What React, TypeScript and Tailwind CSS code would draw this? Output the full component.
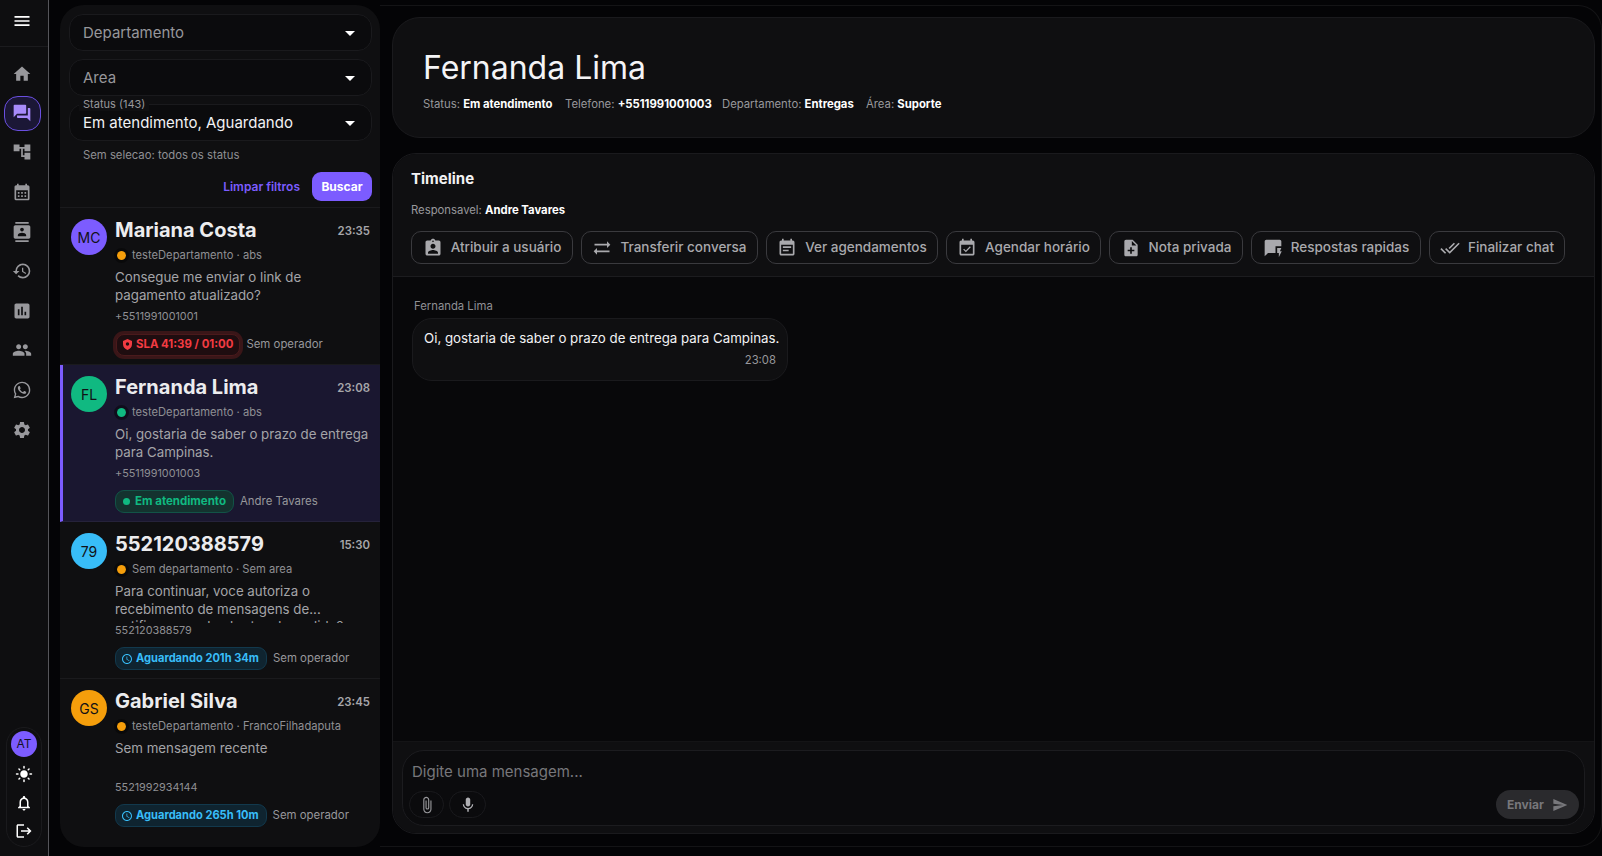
import React from "react";
import {
  MdHome, MdForum, MdAccountTree, MdCalendarMonth, MdContacts, MdHistory, MdAssessment, MdPeople,
  MdWhatsapp, MdSettings, MdMenu, MdArrowDropDown, MdLightMode, MdOutlineNotifications, MdLogout,
  MdAssignmentInd, MdSyncAlt, MdEventNote, MdEventAvailable, MdNoteAdd, MdQuickreply, MdDoneAll,
  MdAttachFile, MdMic, MdSend, MdAccessTime,
} from "react-icons/md";

const navIcons = [MdHome, MdForum, MdAccountTree, MdCalendarMonth, MdContacts, MdHistory, MdAssessment, MdPeople, MdWhatsapp, MdSettings];

const actions = [
  { label: "Atribuir a usuário", icon: MdAssignmentInd, w: "w-[162px]" },
  { label: "Transferir conversa", icon: MdSyncAlt, w: "w-[177px]" },
  { label: "Ver agendamentos", icon: MdEventNote, w: "w-[172px]" },
  { label: "Agendar horário", icon: MdEventAvailable, w: "w-[155px]" },
  { label: "Nota privada", icon: MdNoteAdd, w: "w-[134px]" },
  { label: "Respostas rapidas", icon: MdQuickreply, w: "w-[170px]" },
  { label: "Finalizar chat", icon: MdDoneAll, w: "w-[136px]" },
];

function ShieldIcon() {
  return (
    <svg viewBox="0 0 10 12" className="h-[11px] w-[9px]" fill="currentColor">
      <path fillRule="evenodd" d="M5 0 10 2v3.6C10 8.6 7.9 11 5 12 2.1 11 0 8.6 0 5.6V2L5 0Zm0 3.6a1.9 1.9 0 1 0 0 3.8 1.9 1.9 0 0 0 0-3.8Z" />
    </svg>
  );
}

function Select({ label, strong }: { label: string; strong?: boolean }) {
  return (
    <div className="flex h-[37px] items-center justify-between rounded-[14px] border border-[#1a1a1d] bg-[#0b0b0d] pl-[13px] pr-[9px]">
      <span className={strong ? "pt-[2px] text-[15px] text-[#f2f2f4]" : "pt-[2px] text-[15px] text-[#97979b]"}>{label}</span>
      <MdArrowDropDown className="text-[24px] text-white" />
    </div>
  );
}

function Conversation({
  initials, color, name, time, dot, sub, msg, extra, phone, chip, op, active,
}: {
  initials: string; color: string; name: string; time: string; dot: string; sub: string; msg: React.ReactNode;
  extra?: string; phone: string; chip: React.ReactNode; op: string; active?: boolean;
}) {
  return (
    <div className={`flex h-[157px] shrink-0 gap-2 border-b pt-[10px] pr-[10px] last:border-b-0 ${active ? "border-l-[3px] border-b-[#25223a] border-l-[#7c5cff] bg-[#1a1730] pl-2" : "border-b-[#1a1a1d] pl-[11px]"}`}>
      <div className={`mt-px flex size-9 shrink-0 items-center justify-center rounded-full text-[14px] text-[#111116] ${color}`}>{initials}</div>
      <div className="min-w-0 flex-1">
        <div className="flex h-6 items-center justify-between">
          <span className="text-[20px] font-bold text-[#ececee]">{name}</span>
          <span className="mt-1 text-[11.4px] font-semibold text-[#a6a6aa]">{time}</span>
        </div>
        <div className="mt-[5px] flex h-4 items-center gap-[6px] text-[11.2px] text-[#8f8f94]">
          <span className={`ml-[2px] size-[9px] rounded-full outline-[3px] outline-[#000000]/40 ${dot}`} />
          <span>{sub}</span>
        </div>
        <div className="mt-[6px] h-[40px] overflow-hidden text-[13.3px] leading-[17.5px] text-[#a4a4a8]">
          {msg}
          {extra && <div className="truncate">{extra}</div>}
        </div>
        <div className="text-[10.8px] leading-4 text-[#8f8f94]">{phone}</div>
        <div className="mt-2 flex h-[23px] items-center gap-[6px] text-[11.4px] text-[#97979b]">
          {chip}
          <span>{op}</span>
        </div>
      </div>
    </div>
  );
}

export default function App() {
  return (
    <div className="flex h-[856px] w-[1602px] overflow-hidden bg-[#040406] font-['Inter',sans-serif]">
      {/* barra lateral */}
      <aside className="flex w-[49px] shrink-0 flex-col border-r border-r-[#55555a] bg-[#0e0e10]">
        <div className="flex h-[47px] shrink-0 items-center justify-center border-b border-b-[#1b1b1e] pb-1 pr-[5px]">
          <MdMenu className="text-[20px] text-white" />
        </div>
        <nav className="flex flex-col items-center pt-[7px] pr-[4px]">
          {navIcons.map((Icon, i) =>
            i === 1 ? (
              <div key={i} className="my-[2px] flex h-[35px] w-[37px] items-center justify-center rounded-[14px] border border-[#6a4fe0] bg-[#1b1736]">
                <Icon className="text-[20px] text-[#a78bfa]" />
              </div>
            ) : (
              <div key={i} className="flex h-[39.6px] w-[37px] items-center justify-center">
                <Icon className="text-[20px] text-[#98989c]" />
              </div>
            ),
          )}
        </nav>
        <div className="mt-auto mb-[9px] ml-[6px] flex h-[120px] w-9 flex-col items-center rounded-[18px] border border-[#1a1a1d] pt-[3px]">
          <div className="flex size-[26px] items-center justify-center rounded-full bg-[#7c5cff] text-[12px] text-[#14121f]">AT</div>
          <MdLightMode className="mt-2 text-[18px] text-white" />
          <MdOutlineNotifications className="mt-[11px] text-[18px] text-white" />
          <MdLogout className="mt-[10px] text-[18px] text-white" />
        </div>
      </aside>

      <div className="mt-[5px] mb-[9px] ml-[11px] flex min-w-0 flex-1">
        {/* lista de conversas */}
        <section className="flex w-[320px] shrink-0 flex-col overflow-hidden rounded-[24px] bg-[#0f0f11]">
          <div className="h-[203px] shrink-0 border-b border-b-[#1a1a1d] pl-[9px] pr-2 pt-[9px]">
            <Select label="Departamento" />
            <div className="mt-2"><Select label="Area" /></div>
            <div className="relative mt-2">
              <Select label="Em atendimento, Aguardando" strong />
              <span className="absolute -top-[7px] left-[10px] bg-[#0f0f11] px-1 text-[11px] leading-[14px] text-[#98989c]">Status (143)</span>
            </div>
            <div className="mt-[6px] pl-[14px] text-[11.3px] leading-4 text-[#8f8f94]">Sem selecao: todos os status</div>
            <div className="mt-[9px] flex items-center justify-end gap-[12px]">
              <span className="text-[12px] font-semibold text-[#7c5cff]">Limpar filtros</span>
              <span className="flex h-[29px] w-[60px] items-center justify-center rounded-[9px] bg-[#7c5cff] text-[12px] font-bold text-white">Buscar</span>
            </div>
          </div>
          <div className="flex min-h-0 flex-1 flex-col overflow-hidden">
            <Conversation
              initials="MC" color="bg-[#7c5cff]" name="Mariana Costa" time="23:35" dot="bg-[#f59e0b]" sub="testeDepartamento · abs"
              msg="Consegue me enviar o link de pagamento atualizado?" phone="+5511991001001" op="Sem operador"
              chip={
                <span className="ml-px flex h-[22px] items-center gap-[4px] rounded-[8px] border border-[#4a1a1c] bg-[#1f0d10] px-[6px] text-[11.4px] font-bold text-[#f23b42] shadow-[0_0_0_3px_#3a1618]">
                  <ShieldIcon />
                  SLA 41:39 / 01:00
                </span>
              }
            />
            <Conversation
              active initials="FL" color="bg-[#10b981]" name="Fernanda Lima" time="23:08" dot="bg-[#10b981]" sub="testeDepartamento · abs"
              msg="Oi, gostaria de saber o prazo de entrega para Campinas." phone="+5511991001003" op="Andre Tavares"
              chip={
                <span className="flex h-[23px] items-center gap-[5px] rounded-[9px] border border-[#125347] bg-[#14332f] px-[7px] text-[11.5px] font-bold text-[#10b981]">
                  <span className="size-[7px] rounded-full bg-[#10b981]" />
                  Em atendimento
                </span>
              }
            />
            <Conversation
              initials="79" color="bg-[#38bdf8]" name="552120388579" time="15:30" dot="bg-[#f59e0b]" sub="Sem departamento · Sem area"
              msg="Para continuar, voce autoriza o recebimento de mensagens de..." extra="notificacoes e lembretes do pedido?" phone="552120388579" op="Sem operador"
              chip={
                <span className="flex h-[23px] items-center gap-[3px] rounded-[9px] border border-[#12394d] bg-[#0f2430] pl-[5px] pr-[7px] text-[11.1px] font-bold text-[#38bdf8]">
                  <MdAccessTime className="text-[12px]" />
                  Aguardando 201h 34m
                </span>
              }
            />
            <Conversation
              initials="GS" color="bg-[#f59e0b]" name="Gabriel Silva" time="23:45" dot="bg-[#f59e0b]" sub="testeDepartamento · FrancoFilhadaputa"
              msg="Sem mensagem recente" phone="5521992934144" op="Sem operador"
              chip={
                <span className="flex h-[23px] items-center gap-[3px] rounded-[9px] border border-[#12394d] bg-[#0f2430] pl-[5px] pr-[7px] text-[11.1px] font-bold text-[#38bdf8]">
                  <MdAccessTime className="text-[12px]" />
                  Aguardando 265h 10m
                </span>
              }
            />
          </div>
        </section>

        {/* conversa */}
        <main className="flex min-w-0 flex-1 flex-col rounded-r-[24px] border-y border-r border-[#141416] pl-3 pr-[6px] pt-[11px] pb-3">
          <header className="flex h-[121px] shrink-0 flex-col rounded-[28px] border border-[#1a1a1d] bg-[#0f0f11] pl-[30px] pt-[29px]">
            <h1 className="text-[32px] leading-[42px] font-normal text-[#f4f4f6]">Fernanda Lima</h1>
            <div className="mt-[7px] flex text-[11.3px] leading-4 text-[#98989c]">
              <span className="w-[142px]">Status: <b className="font-bold text-white">Em atendimento</b></span>
              <span className="w-[157px]">Telefone: <b className="font-bold text-white">+5511991001003</b></span>
              <span className="w-[144px]">Departamento: <b className="font-bold text-white">Entregas</b></span>
              <span>Área: <b className="font-bold text-white">Suporte</b></span>
            </div>
          </header>
          <div className="mt-[15px] flex min-h-0 flex-1 flex-col overflow-hidden rounded-[24px] border border-[#1a1a1d] bg-[#08080a]">
            <div className="h-[123px] shrink-0 border-b border-b-[#1c1c1f] bg-[#0f0f11] pl-[18px] pt-[15px]">
              <div className="text-[15px] leading-5 font-bold text-[#f2f2f4]">Timeline</div>
              <div className="mt-[13px] text-[11.3px] leading-4 text-[#98989c]">Responsavel: <b className="font-bold text-white">Andre Tavares</b></div>
              <div className="mt-[13px] flex gap-2">
                {actions.map((a) => (
                  <div key={a.label} className={`flex h-[33px] items-center justify-center gap-2 rounded-[10px] border border-[#3a3a3e] text-[13.5px] font-medium text-[#a9a9ad] ${a.w}`}>
                    <a.icon className="text-[20px]" />
                    {a.label}
                  </div>
                ))}
              </div>
            </div>
            <div className="min-h-0 flex-1 pl-[19px] pt-[21px]">
              <div className="pl-[2px] text-[11.3px] leading-4 text-[#8f8f94]">Fernanda Lima</div>
              <div className="mt-[4px] h-[63px] w-[376px] rounded-[20px] border border-[#1a1a1d] bg-[#0f0f11] px-[11px] pt-[10px]">
                <div className="whitespace-nowrap text-[13.3px] leading-[18px] text-[#f2f2f4]">Oi, gostaria de saber o prazo de entrega para Campinas.</div>
                <div className="mt-[5px] text-right text-[11.3px] leading-4 text-[#98989c]">23:08</div>
              </div>
            </div>
            <div className="h-[92px] shrink-0 border-t border-t-[#141416] bg-[#0f0f11] px-[9px] pt-2">
              <div className="flex h-[76px] flex-col rounded-[22px] border border-[#1c1c1f] bg-[#0b0b0d] pl-[6px] pr-[5px]">
                <div className="pl-[3px] pt-[11px] text-[15px] leading-5 text-[#77777b]">Digite uma mensagem...</div>
                <div className="mt-[8px] flex items-center gap-[5px]">
                  <span className="flex h-[27px] w-[35px] items-center justify-center rounded-full border border-[#1a1a1d] text-[#98989c]"><MdAttachFile className="text-[18px]" /></span>
                  <span className="flex h-[27px] w-[37px] items-center justify-center rounded-full border border-[#1a1a1d] text-[#b0b0b4]"><MdMic className="text-[18px]" /></span>
                  <span className="ml-auto flex h-[29px] w-[83px] items-center justify-center gap-2 rounded-full bg-[#2a2a2d] text-[12px] font-bold text-[#77777b]">
                    Enviar <MdSend className="text-[16px]" />
                  </span>
                </div>
              </div>
            </div>
          </div>
        </main>
      </div>
    </div>
  );
}
